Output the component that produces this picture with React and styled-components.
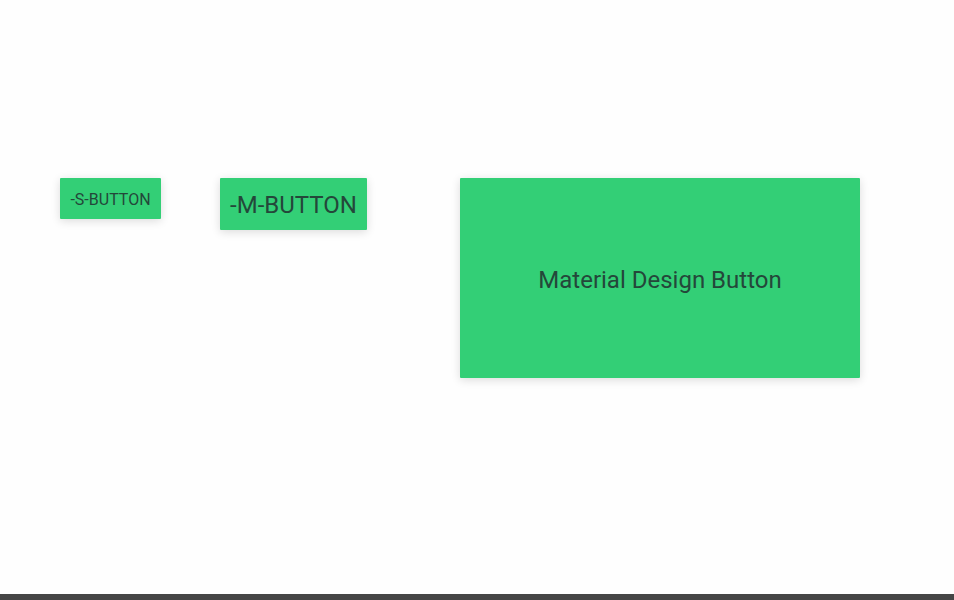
import React from 'react';
import styled, {createGlobalStyle} from 'styled-components';

const GlobalStyle = createGlobalStyle`
    html, body {
        margin: 0;
        padding: 0;
        background: #fefefe;
        font-family: Roboto, "Liberation Sans", sans-serif;
    }
`;

const Page = styled.div`
    min-height: 100vh;
    display: flex;
    flex-direction: column;
`;

const Stage = styled.main`
    flex: 1;
    display: flex;
    align-items: flex-start;
    padding: 178px 0 0 60px;
`;

// per-size box, type and spacing before the button
const sizes = {
    s: {width: 101, height: 41, font: 16, gap: 0, lift: 2},
    m: {width: 147, height: 52, font: 24, gap: 59, lift: 2},
    l: {width: 400, height: 200, font: 24, gap: 93, lift: 4}
};

const Button = styled.button`
    box-sizing: border-box;
    display: flex;
    align-items: center;
    justify-content: center;
    width: ${p => sizes[p.$size].width}px;
    height: ${p => sizes[p.$size].height}px;
    margin-left: ${p => sizes[p.$size].gap}px;
    padding: ${p => sizes[p.$size].lift}px 0 0;
    border: none;
    border-radius: 1px;
    background: #33cf76;
    color: #24473a;
    font-family: Roboto, "Liberation Sans", sans-serif;
    font-size: ${p => sizes[p.$size].font}px;
    white-space: nowrap;
    box-shadow: 0 2px 10px rgba(0, 0, 0, 0.14);
    cursor: pointer;
`;

const Footer = styled.footer`
    height: 6px;
    background: #454545;
`;

export default function App() {
    return (
        <Page>
            <GlobalStyle/>
            <Stage>
                <Button $size="s">-S-BUTTON</Button>
                <Button $size="m">-M-BUTTON</Button>
                <Button $size="l">Material Design Button</Button>
            </Stage>
            <Footer/>
        </Page>
    );
}
